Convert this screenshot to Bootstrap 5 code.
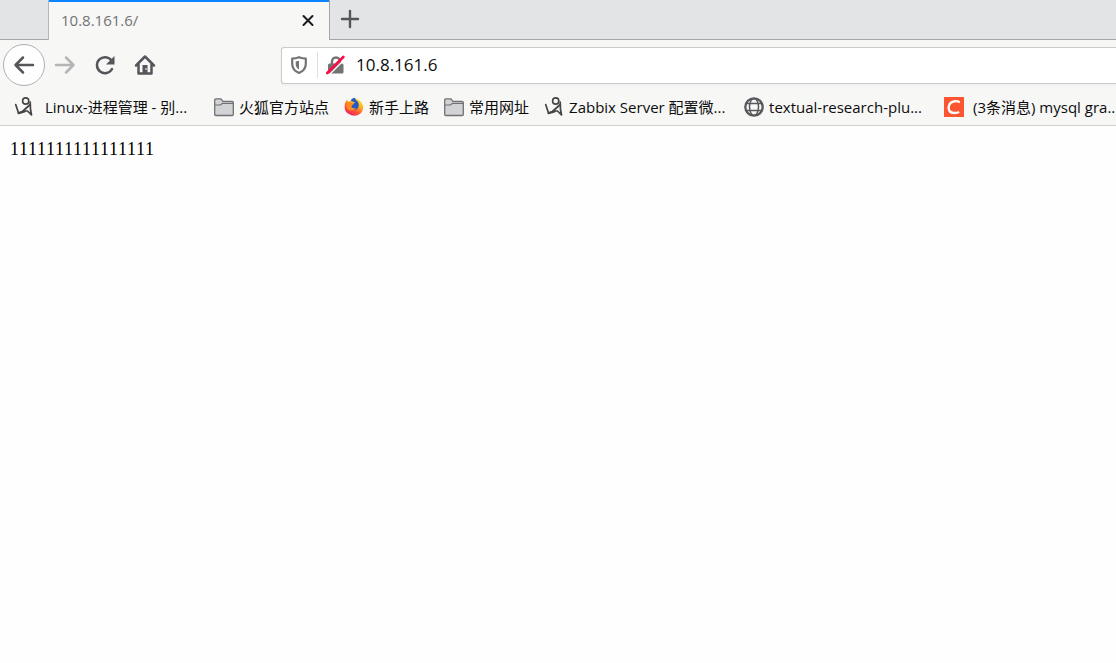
<!DOCTYPE html>
<html lang="zh-CN">
<head>
<meta charset="utf-8">
<meta name="viewport" content="width=device-width, initial-scale=1">
<title>10.8.161.6/</title>
<link href="https://cdn.jsdelivr.net/npm/bootstrap@5.3.0/dist/css/bootstrap.min.css" rel="stylesheet">
<script src="https://cdn.jsdelivr.net/npm/bootstrap@5.3.0/dist/js/bootstrap.bundle.min.js"></script>
<style>
  body { font-family: "Open Sans", "Noto Sans CJK SC", sans-serif; font-size: 15px; line-height: 20px; color: #0c0c0d; background: #fefefe; }
  button { padding: 0; border: 0; background: none; color: #55565a; }
  svg { display: block; flex: none; }
  .tab-strip { height: 40px; background: #e3e4e6; }
  .strip-edge { border-bottom: 1px solid #a5a6a8; }
  .strip-lead { width: 49px; border-right: 1px solid #b4b5b7; }
  .page-tab { width: 280px; background: #f7f7f6; border-top: 2px solid #0a84ff; padding: 0 12px 3px; color: #737373; }
  .page-tab button { color: #1c1c1e; }
  .strip-rest { border-left: 1px solid #a5a6a8; padding: 0 10px 2px; }
  .chrome-bar { background: #f7f7f6; }
  .tool-row { height: 50px; padding-left: 3px; }
  .back-btn { width: 42px; height: 42px; border: 1px solid #b0b0b3; border-radius: 50%; background: #fefefe; }
  .tool-btn { width: 40px; height: 40px; }
  .nav-group { width: 278px; }
  .address-box { height: 37px; border: 1px solid #cbcbcc; border-right: 0; border-radius: 3px 0 0 3px; background: #fff; box-shadow: 0 1px 3px #0000000d; padding-left: 7px; }
  .address-box .divider { width: 1px; height: 26px; background: #dedede; margin: 0 8px; }
  .address-box input { border: 0; outline: 0; padding: 0; margin-left: 10px; font-size: 17px; color: #0c0c0d; min-width: 0; background: none; }
  .bookmark-row { height: 36px; gap: 15px; padding: 0 0 1px 14px; border-bottom: 1px solid #cfcfcf; }
  .bookmark-row a { color: #0c0c0d; gap: 5px; flex: none; }
  .bookmark-row .long-mark { width: 185px; }
  .bookmark-row .wide-gap { gap: 11px; }
  .page-text { font-family: "Liberation Serif", serif; font-size: 18px; font-kerning: none; padding: 13px 10px; color: #000; }
</style>
</head>
<body>
<svg width="0" height="0" class="position-absolute" aria-hidden="true">
  <symbol id="folder" viewBox="0 0 20 20"><path d="M.7 17.500V3Q.7 1.800 1.900 1.800h5l2 2.500H18q1.300 0 1.300 1.200V17.500q0 1-1 1H1.700q-1 0-1-1z" fill="#d2d3d4" stroke="#707174" stroke-width="1.300"/><path d="M1 8h5.500l2-1.700H19" fill="none" stroke="#707174" stroke-width="1.200"/></symbol>
  <symbol id="figure" viewBox="0 0 20 20"><g fill="none" stroke="#444" stroke-linecap="round" stroke-linejoin="round"><circle cx="11.700" cy="4" r="3.100" stroke-width="1.600"/><path d="M1.700 7.500L4.500 16l4-1.500L16.200 7.500" stroke-width="1.700"/><path d="M16.200 5l.3 7.500 1 5.500-4-4H9" stroke-width="1.700"/><path d="M4.500 16.300l6-1.800" stroke-width="2"/></g></symbol>
</svg>

<header>
  <div class="tab-strip d-flex">
    <div class="strip-lead strip-edge"></div>
    <div class="page-tab d-flex align-items-center justify-content-between">
      <span>10.8.161.6/</span>
      <button type="button" aria-label="关闭标签页"><svg width="18" height="18" viewBox="0 0 18 18"><path d="M4.500 5l9 9M13.500 5l-9 9" stroke="currentColor" stroke-width="2" stroke-linecap="round"/></svg></button>
    </div>
    <div class="strip-rest strip-edge flex-grow-1 d-flex align-items-center">
      <button type="button" aria-label="新建标签页"><svg width="20" height="20" viewBox="0 0 20 20"><path d="M10 2v16M2 10h16" stroke="currentColor" stroke-width="2.400" stroke-linecap="round"/></svg></button>
    </div>
  </div>

  <div class="chrome-bar">
    <div class="tool-row d-flex align-items-center">
      <nav class="nav-group d-flex align-items-center flex-shrink-0" aria-label="导航">
        <button type="button" class="back-btn d-flex align-items-center justify-content-center" aria-label="后退"><svg width="22" height="22" viewBox="0 0 22 22"><path d="M20 11H2.500M10 3.500L2.500 11l7.500 7.500" fill="none" stroke="currentColor" stroke-width="2.500" stroke-linecap="round" stroke-linejoin="round"/></svg></button>
        <button type="button" class="tool-btn d-flex align-items-center justify-content-center" aria-label="前进" disabled><svg width="22" height="22" viewBox="0 0 22 22"><path d="M2 11h17.500M12 3.500l7.500 7.500-7.500 7.500" fill="none" stroke="#b5b5b7" stroke-width="2.500" stroke-linecap="round" stroke-linejoin="round"/></svg></button>
        <button type="button" class="tool-btn d-flex align-items-center justify-content-center" aria-label="刷新"><svg width="22" height="22" viewBox="0 0 22 22"><path d="M17.500 6.500A8 8 0 1 0 18 15" fill="none" stroke="currentColor" stroke-width="2.500" stroke-linecap="round"/><path d="M20.500 2v8.500h-8.500z" fill="currentColor"/></svg></button>
        <button type="button" class="tool-btn d-flex align-items-center justify-content-center" aria-label="主页"><svg width="22" height="22" viewBox="0 0 22 22"><path d="M2 11.500L11 2.500l9 9M4.500 10v9.500h13V10" fill="none" stroke="currentColor" stroke-width="2.500" stroke-linecap="round" stroke-linejoin="round"/><path d="M8.500 11h5v8h-5z" fill="currentColor"/><path d="M11.500 14h1v2h-1z" fill="#fff"/></svg></button>
      </nav>
      <div class="address-box d-flex align-items-center flex-grow-1">
        <svg width="20" height="20" viewBox="0 0 20 20"><path d="M10 2.200q3.500 1.200 6.800 1.300V9q0 6-6.800 9-6.800-3-6.800-9V3.500Q6.500 3.400 10 2.200z" fill="none" stroke="#737375" stroke-width="2.200" stroke-linejoin="round"/><path d="M10 5.700v8.800Q6.700 12.500 6.700 9V6.400z" fill="#737375"/></svg>
        <span class="divider"></span>
        <svg width="20" height="20" viewBox="0 0 20 20"><path d="M6 9V6.500a4 4 0 0 1 8 0V9" fill="none" stroke="#737375" stroke-width="2.400"/><rect x="2" y="8.500" width="15.500" height="10" rx="1.500" fill="#737375"/><path d="M3.500 19.500L19.500 3.500" stroke="#fff" stroke-width="1.200"/><path d="M1.300 18L17.300 2" stroke="#ff0a46" stroke-width="2.600" stroke-linecap="round"/></svg>
        <input type="text" class="flex-grow-1" value="10.8.161.6" aria-label="地址">
      </div>
    </div>

    <nav class="bookmark-row d-flex align-items-center overflow-hidden text-nowrap" aria-label="书签">
      <a href="#" class="long-mark wide-gap d-flex align-items-center text-decoration-none"><svg width="20" height="20"><use href="#figure"/></svg>Linux-进程管理 - 别...</a>
      <a href="#" class="d-flex align-items-center text-decoration-none"><svg width="20" height="20"><use href="#folder"/></svg>火狐官方站点</a>
      <a href="#" class="d-flex align-items-center text-decoration-none"><svg width="20" height="20" viewBox="0 0 20 20">
        <defs><linearGradient id="flame" x1=".8" y1="0" x2=".2" y2="1"><stop offset="0" stop-color="#fff044"/><stop offset=".35" stop-color="#ffb01e"/><stop offset=".65" stop-color="#ff5533"/><stop offset="1" stop-color="#e81870"/></linearGradient></defs>
        <path d="M.7 10.500Q.3 6 3 2.500L4 4.500 7 4Q8 1.500 11 1l4 2q3 2 4 5 1 5-2.500 8.500-6 4.500-12.500 0Q.8 14.500.7 10.500z" fill="url(#flame)"/>
        <path d="M6.500 3.500Q8 1 11 .8q0 1.700 1.500 2.700 2.800 2 2.200 5.500-.8 4-4.700 4-3.500-.5-4-4l3.500-2 1.500-1.700-2-.5z" fill="#235bc6"/>
        <path d="M2.500 6.500q2-1.500 4.500-.5l3 .5-2 2q-1 1 0 2 2 1.200 4 .2-1 2.800-4.500 2.800T2.500 11z" fill="#ff8a1f"/></svg>新手上路</a>
      <a href="#" class="d-flex align-items-center text-decoration-none"><svg width="20" height="20"><use href="#folder"/></svg>常用网址</a>
      <a href="#" class="long-mark d-flex align-items-center text-decoration-none"><svg width="20" height="20"><use href="#figure"/></svg>Zabbix Server 配置微...</a>
      <a href="#" class="long-mark d-flex align-items-center text-decoration-none"><svg width="20" height="20" viewBox="0 0 20 20"><g fill="none" stroke="#58595c"><circle cx="10" cy="10" r="8.700" stroke-width="2.300"/><ellipse cx="10" cy="10" rx="4.500" ry="8.500" stroke-width="1.500"/><path d="M2.500 6.500h15M2.500 13.500h15" stroke-width="1.500"/></g></svg>textual-research-plu...</a>
      <a href="#" class="long-mark d-flex align-items-center text-decoration-none"><svg width="20" height="20" viewBox="0 0 20 20"><path d="M0 0h20v20H0z" fill="#fc5531"/><path d="M15.800 5.200Q13.500 4 11 4.200 5 4.800 4.600 10.500q0 5.500 6 5.500 2.500 0 4.500-1" fill="none" stroke="#fff" stroke-width="2.400"/></svg><span class="ps-1">(3条消息) mysql gra...</span></a>
    </nav>
  </div>
</header>

<main class="page-text">1111111111111111</main>
</body>
</html>
